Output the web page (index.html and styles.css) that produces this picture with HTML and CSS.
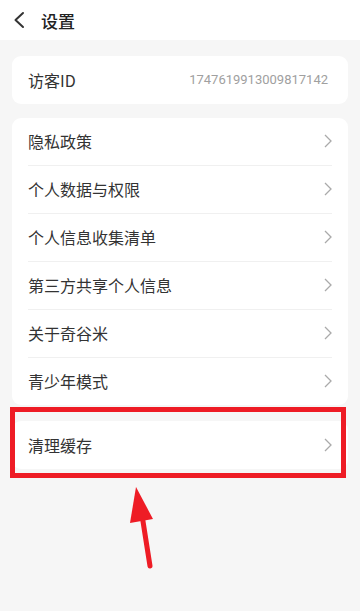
FILE: index.html
```html
<!DOCTYPE html>
<html lang="zh">
<head>
<meta charset="utf-8">
<link rel="stylesheet" href="styles.css">
</head>
<body>
<div class="page">
  <header class="topbar">
    <svg class="back" width="14" height="18" viewBox="0 0 14 18"><path d="M11 2 L3.5 9 L11 16" fill="none" stroke="#333" stroke-width="2" stroke-linecap="round" stroke-linejoin="round"/></svg>
    <span class="title">设置</span>
  </header>
  <main class="content">
    <section class="card">
      <div class="row">
        <span class="label">访客ID</span>
        <span class="value">1747619913009817142</span>
      </div>
    </section>
    <section class="card">
      <div class="row line"><span class="label">隐私政策</span><svg class="chev" width="8" height="14" viewBox="0 0 8 14"><path d="M1 1 L7 7 L1 13" fill="none" stroke="#aaa" stroke-width="1.3"/></svg></div>
      <div class="row line"><span class="label">个人数据与权限</span><svg class="chev" width="8" height="14" viewBox="0 0 8 14"><path d="M1 1 L7 7 L1 13" fill="none" stroke="#aaa" stroke-width="1.3"/></svg></div>
      <div class="row line"><span class="label">个人信息收集清单</span><svg class="chev" width="8" height="14" viewBox="0 0 8 14"><path d="M1 1 L7 7 L1 13" fill="none" stroke="#aaa" stroke-width="1.3"/></svg></div>
      <div class="row line"><span class="label">第三方共享个人信息</span><svg class="chev" width="8" height="14" viewBox="0 0 8 14"><path d="M1 1 L7 7 L1 13" fill="none" stroke="#aaa" stroke-width="1.3"/></svg></div>
      <div class="row line"><span class="label">关于奇谷米</span><svg class="chev" width="8" height="14" viewBox="0 0 8 14"><path d="M1 1 L7 7 L1 13" fill="none" stroke="#aaa" stroke-width="1.3"/></svg></div>
      <div class="row"><span class="label">青少年模式</span><svg class="chev" width="8" height="14" viewBox="0 0 8 14"><path d="M1 1 L7 7 L1 13" fill="none" stroke="#aaa" stroke-width="1.3"/></svg></div>
    </section>
    <section class="card cache">
      <div class="row"><span class="label">清理缓存</span><svg class="chev" width="8" height="14" viewBox="0 0 8 14"><path d="M1 1 L7 7 L1 13" fill="none" stroke="#aaa" stroke-width="1.3"/></svg></div>
    </section>
  </main>
  <div class="highlight"></div>
  <svg class="arrow" width="360" height="611" viewBox="0 0 360 611">
    <line x1="150" y1="566" x2="142" y2="515" stroke="#ee1c25" stroke-width="5" stroke-linecap="round"/>
    <polygon points="136,487 130,523 153,519" fill="#ee1c25"/>
  </svg>
</div>
</body>
</html>
```
FILE: styles.css
```css
* { box-sizing: border-box; }
html, body { margin: 0; padding: 0; }
body {
  width: 360px;
  height: 611px;
  overflow: hidden;
  background: #f6f6f6;
  font-family: "Noto Sans CJK SC", "Noto Sans", sans-serif;
  color: #333;
}
.page { position: relative; width: 360px; height: 611px; }
.topbar {
  height: 40px;
  background: #fff;
  display: flex;
  align-items: center;
  padding-left: 12px;
}
.back { display: block; margin-right: 15px; }
.title { font-size: 17px; font-weight: 500; color: #222; line-height: 1; }
.content {
  padding: 16px 12px 0;
  display: flex;
  flex-direction: column;
  gap: 14px;
}
.card {
  background: #fff;
  border-radius: 9px;
  padding: 0 16px;
}
.cache { margin-top: 2px; }
.row {
  height: 47.5px;
  display: flex;
  align-items: center;
  justify-content: space-between;
}
.row.line { border-bottom: 1px solid #f0f0f0; height: 48px; }
.label { font-size: 16px; color: #333; line-height: 1; }
.value { font-family: Roboto, "Noto Sans", sans-serif; font-size: 13px; color: #a0a0a0; margin-right: 4px; }
.chev { display: block; margin-right: 0; }
.highlight {
  position: absolute;
  left: 10px;
  top: 407px;
  width: 336px;
  height: 71px;
  border: 5.5px solid #ee1c25;
}
.arrow { position: absolute; left: 0; top: 0; pointer-events: none; }
```
